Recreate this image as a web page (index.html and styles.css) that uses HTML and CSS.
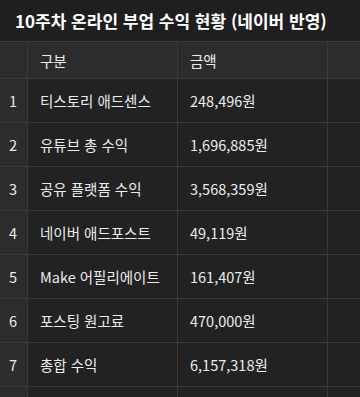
FILE: index.html
```html
<!DOCTYPE html>
<html lang="ko">
<head>
<meta charset="utf-8">
<link rel="stylesheet" href="styles.css">
</head>
<body>
<div class="sheet">
  <div class="title">10주차 온라인 부업 수익 현황 (네이버 반영)</div>
  <div class="grid">
    <div class="cell idx head"></div>
    <div class="cell head">구분</div>
    <div class="cell head">금액</div>
    <div class="cell head last"></div>

    <div class="cell idx">1</div>
    <div class="cell">티스토리 애드센스</div>
    <div class="cell">248,496원</div>
    <div class="cell last"></div>

    <div class="cell idx">2</div>
    <div class="cell">유튜브 총 수익</div>
    <div class="cell">1,696,885원</div>
    <div class="cell last"></div>

    <div class="cell idx">3</div>
    <div class="cell">공유 플랫폼 수익</div>
    <div class="cell">3,568,359원</div>
    <div class="cell last"></div>

    <div class="cell idx">4</div>
    <div class="cell">네이버 애드포스트</div>
    <div class="cell">49,119원</div>
    <div class="cell last"></div>

    <div class="cell idx">5</div>
    <div class="cell">Make 어필리에이트</div>
    <div class="cell">161,407원</div>
    <div class="cell last"></div>

    <div class="cell idx">6</div>
    <div class="cell">포스팅 원고료</div>
    <div class="cell">470,000원</div>
    <div class="cell last"></div>

    <div class="cell idx">7</div>
    <div class="cell">총합 수익</div>
    <div class="cell">6,157,318원</div>
    <div class="cell last"></div>

    <div class="cell idx tail"></div>
    <div class="cell tail"></div>
    <div class="cell tail"></div>
    <div class="cell tail last"></div>
  </div>
</div>
</body>
</html>
```
FILE: styles.css
```css
html, body {
  margin: 0;
  padding: 0;
  background: #212121;
}
.sheet {
  width: 360px;
  height: 397px;
  overflow: hidden;
  font-family: "Noto Sans CJK KR", "Noto Sans", sans-serif;
  color: #ececec;
}
.title {
  height: 41px;
  box-sizing: border-box;
  background: #1f1f1f;
  color: #ffffff;
  font-weight: 700;
  font-size: 17px;
  line-height: 41px;
  padding-left: 15px;
  white-space: nowrap;
}
.grid {
  display: grid;
  grid-template-columns: 28px 150px 150px 1fr;
  grid-auto-rows: 44px;
  grid-template-rows: 37px;
  border-top: 1px solid #3c3c3c;
}
.cell {
  box-sizing: border-box;
  border-right: 1px solid #3a3a3a;
  border-bottom: 1px solid #3a3a3a;
  background: #222222;
  display: flex;
  align-items: center;
  padding-left: 12px;
  font-size: 14.5px;
  white-space: nowrap;
}
.cell.last {
  border-right: none;
}
.cell.head {
  background: #2c2c2c;
}
.cell.idx {
  background: #2c2c2c;
  padding-left: 9px;
}
.cell.tail {
  border-bottom: none;
}
```
